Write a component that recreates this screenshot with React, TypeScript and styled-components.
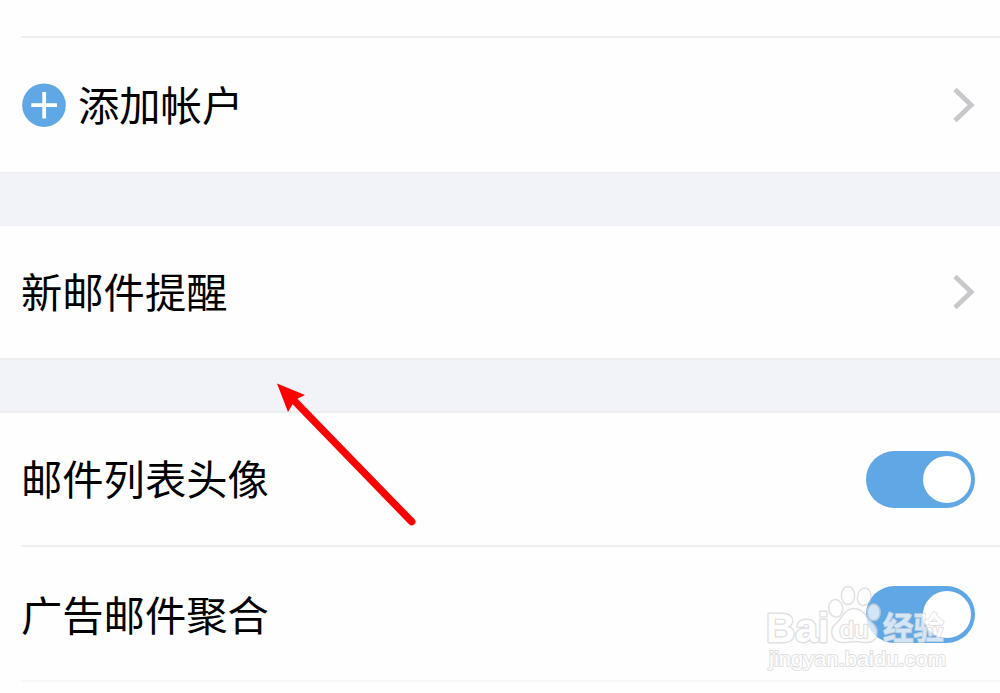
import React from "react";
import styled, { createGlobalStyle } from "styled-components";

const GlobalStyle = createGlobalStyle`
  body {
    margin: 0;
    background: #fefefe;
    font-family: "Noto Sans CJK SC", sans-serif;
    color: #000;
  }
`;

const Page = styled.main`
  position: relative;
  display: flex;
  flex-direction: column;
  width: 1000px;
  height: 693px;
  overflow: hidden;
`;

const Divider = styled.hr<{ $faint?: boolean }>`
  flex: none;
  width: calc(100% - 21px);
  height: 2px;
  margin: 0 0 0 21px;
  border: 0;
  background: ${(p) => (p.$faint ? "#f6f6f7" : "#efeff0")};
`;

const TopSpace = styled.div`
  flex: none;
  height: 36px;
`;

const Row = styled.section<{ $height: number; $top?: number }>`
  flex: none;
  box-sizing: border-box;
  display: flex;
  align-items: center;
  justify-content: space-between;
  height: ${(p) => p.$height}px;
  padding: ${(p) => p.$top ?? 0}px 25px 0 21px;
`;

const Gap = styled.div<{ $height: number; $top: number; $bottom: number }>`
  flex: none;
  box-sizing: border-box;
  height: ${(p) => p.$height}px;
  background: #f2f3f8;
  border: 0 solid #eeeeef;
  border-top-width: ${(p) => p.$top}px;
  border-bottom-width: ${(p) => p.$bottom}px;
`;

const Label = styled.span`
  display: flex;
  align-items: center;
  gap: 12px;
  font-size: 41.3px;
  line-height: 60px;
  white-space: nowrap;
`;

const LabelText = styled.span`
  padding-bottom: 4px;
`;

const AddIcon = styled.svg`
  flex: none;
  width: 45px;
  height: 44px;
`;

const ChevronIcon = styled.svg`
  flex: none;
  width: 22px;
  height: 36px;
`;

const Toggle = styled.span`
  box-sizing: border-box;
  display: flex;
  justify-content: flex-end;
  align-items: center;
  width: 109px;
  height: 57px;
  padding-right: 4px;
  border-radius: 29px;
  background: #60a7e6;
`;

const Knob = styled.span`
  width: 48px;
  height: 47px;
  border-radius: 50%;
  background: #fff;
`;

const ArrowOverlay = styled.svg`
  position: absolute;
  left: 270px;
  top: 376px;
  width: 150px;
  height: 156px;
`;

const Watermark = styled.svg`
  position: absolute;
  left: 760px;
  top: 580px;
  width: 200px;
  height: 100px;
  opacity: 0.72;
`;

const Chevron = () => (
  <ChevronIcon viewBox="0 0 22 36" aria-hidden="true">
    <path d="M2 2.6 18.2 18 2 33.4" fill="none" stroke="#c8c8cc" strokeWidth="4.8" />
  </ChevronIcon>
);

const Switch = () => (
  <Toggle role="switch" aria-checked="true">
    <Knob />
  </Toggle>
);

const outline = {
  fill: "#fff",
  stroke: "#d6d6d6",
  strokeWidth: 2.8,
  strokeLinejoin: "round" as const,
  paintOrder: "stroke",
  lengthAdjust: "spacingAndGlyphs" as const,
};

const BaiduMark = () => (
  <Watermark viewBox="0 0 200 100">
    <g fill="#fff" stroke="#d6d6d6" strokeWidth="1.5">
      <ellipse cx="75.7" cy="28.3" rx="7" ry="8.8" transform="rotate(-8 75.7 28.3)" />
      <ellipse cx="88" cy="15.6" rx="6.7" ry="9" />
      <ellipse cx="104.2" cy="16.8" rx="6.7" ry="8.8" transform="rotate(12 104.2 16.8)" />
      <ellipse cx="113.7" cy="32.3" rx="6.5" ry="8.3" />
      <path d="M94 28.5C84 28.5 82 39 76 43.5C68 50 72 62.5 82 62.5C88 62.5 91 61.5 95 61.5C99 61.5 102 62.5 107 62.5C118 62.5 120 50 113 43.5C107 39 104 28.5 94 28.5Z" />
    </g>
    <text x="6" y="61.5" fontFamily="Liberation Sans, sans-serif" fontWeight="700" fontSize="41" textLength="63" {...outline}>Bai</text>
    <text x="79.5" y="58" fontFamily="Liberation Sans, sans-serif" fontSize="24" textLength="29" {...outline} strokeWidth={2.4}>du</text>
    <text x="123" y="59" fontFamily="Noto Sans CJK SC, sans-serif" fontWeight="700" fontSize="30.5" textLength="61" {...outline} strokeWidth={1.8}>经验</text>
    <text x="9" y="86" fontFamily="Liberation Sans, sans-serif" fontSize="20.5" textLength="177" {...outline} strokeWidth={2}>jingyan.baidu.com</text>
  </Watermark>
);

export default function App() {
  return (
    <>
      <GlobalStyle />
      <Page>
        <TopSpace />
        <Divider />
        <Row $height={134}>
          <Label>
            <AddIcon viewBox="0 0 45 44" aria-hidden="true">
              <circle cx="23" cy="22.2" r="21.8" fill="#60a7e6" />
              <path d="M10.3 22.2H36M23.2 9V35.5" fill="none" stroke="#fff" strokeWidth="3.8" />
            </AddIcon>
            <LabelText>添加帐户</LabelText>
          </Label>
          <Chevron />
        </Row>
        <Gap $height={54} $top={1} $bottom={0} />
        <Row $height={132}>
          <Label>
            <LabelText>新邮件提醒</LabelText>
          </Label>
          <Chevron />
        </Row>
        <Gap $height={55} $top={2} $bottom={2} />
        <Row $height={132}>
          <Label>
            <LabelText>邮件列表头像</LabelText>
          </Label>
          <Switch />
        </Row>
        <Divider />
        <Row $height={133} $top={2}>
          <Label>
            <LabelText>广告邮件聚合</LabelText>
          </Label>
          <Switch />
        </Row>
        <Divider $faint />
        <ArrowOverlay viewBox="270 376 150 156" aria-hidden="true">
          <path d="M294 400.5 411.7 521.7" stroke="#f00" strokeWidth="7.4" strokeLinecap="round" />
          <path d="M277 383.5 305 395 295 400 288 412Z" fill="#f00" />
        </ArrowOverlay>
        <BaiduMark />
      </Page>
    </>
  );
}
